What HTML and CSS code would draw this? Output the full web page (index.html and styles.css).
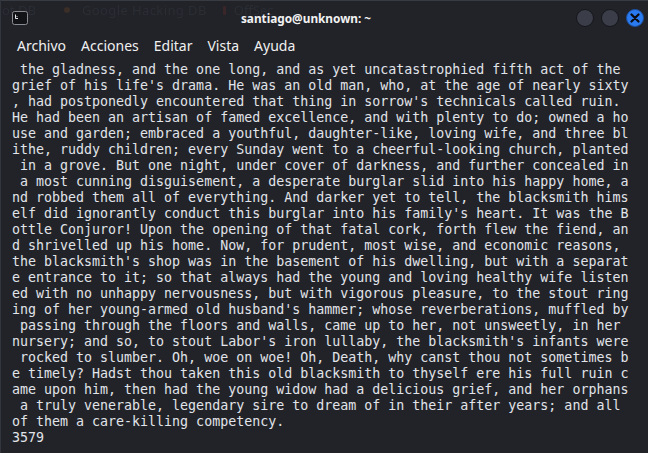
FILE: index.html
```html
<!DOCTYPE html>
<html lang="es">
<head>
<meta charset="utf-8">
<title>santiago@unknown: ~</title>
<link rel="stylesheet" href="styles.css">
</head>
<body>
<div class="window">
  <div class="ghost" aria-hidden="true"><span class="g1">ot DB</span><i class="dot orange"></i><span class="g2">Google Hacking DB</span><i class="dot red"></i><span class="g3">OffSec</span></div>
  <header class="titlebar">
    <div class="app-icon">
      <svg width="16" height="14" viewBox="0 0 16 14">
        <rect x="0.5" y="0.5" width="15" height="13" rx="2" fill="#121317" stroke="#8a8c93"/>
        <path d="M3.5 3.5 L3.5 7.5 M3.5 7.5 L6 7.5" stroke="#e6e6e6" stroke-width="1" fill="none"/>
        <path d="M4.5 5 L5.5 6" stroke="#bdbdbd" stroke-width="1"/>
      </svg>
    </div>
    <div class="title">santiago@unknown: ~</div>
    <div class="controls">
      <span class="btn"></span>
      <span class="btn"></span>
      <span class="btn close">
        <svg width="10" height="10" viewBox="0 0 10 10"><path d="M1.5 1.5 L8.5 8.5 M8.5 1.5 L1.5 8.5" stroke="#0b0c10" stroke-width="2.2" stroke-linecap="round"/></svg>
      </span>
    </div>
  </header>
  <nav class="menubar">
    <span>Archivo</span>
    <span>Acciones</span>
    <span>Editar</span>
    <span>Vista</span>
    <span>Ayuda</span>
  </nav>
  <pre class="term"> the gladness, and the one long, and as yet uncatastrophied fifth act of the
grief of his life's drama. He was an old man, who, at the age of nearly sixty
, had postponedly encountered that thing in sorrow's technicals called ruin.
He had been an artisan of famed excellence, and with plenty to do; owned a ho
use and garden; embraced a youthful, daughter-like, loving wife, and three bl
ithe, ruddy children; every Sunday went to a cheerful-looking church, planted
 in a grove. But one night, under cover of darkness, and further concealed in
 a most cunning disguisement, a desperate burglar slid into his happy home, a
nd robbed them all of everything. And darker yet to tell, the blacksmith hims
elf did ignorantly conduct this burglar into his family's heart. It was the B
ottle Conjuror! Upon the opening of that fatal cork, forth flew the fiend, an
d shrivelled up his home. Now, for prudent, most wise, and economic reasons, 
the blacksmith's shop was in the basement of his dwelling, but with a separat
e entrance to it; so that always had the young and loving healthy wife listen
ed with no unhappy nervousness, but with vigorous pleasure, to the stout ring
ing of her young-armed old husband's hammer; whose reverberations, muffled by
 passing through the floors and walls, came up to her, not unsweetly, in her
nursery; and so, to stout Labor's iron lullaby, the blacksmith's infants were
 rocked to slumber. Oh, woe on woe! Oh, Death, why canst thou not sometimes b
e timely? Hadst thou taken this old blacksmith to thyself ere his full ruin c
ame upon him, then had the young widow had a delicious grief, and her orphans
 a truly venerable, legendary sire to dream of in their after years; and all
of them a care-killing competency.
3579</pre>
</div>
</body>
</html>
```
FILE: styles.css
```css
html, body {
  margin: 0;
  padding: 0;
  background: #212329;
}
.window {
  position: relative;
  width: 648px;
  height: 453px;
  overflow: hidden;
  background: #212329;
  border-left: 1px solid #33353d;
  box-sizing: border-box;
}
.ghost {
  position: absolute;
  left: 0;
  top: 1px;
  display: flex;
  align-items: center;
  font-family: "Noto Sans", sans-serif;
  font-size: 13px;
  line-height: 18px;
  color: #2b2d34;
  filter: blur(0.7px);
  pointer-events: none;
}
.ghost .g1 { margin-left: 1px; }
.ghost .orange { margin-left: 28px; }
.ghost .g2 { margin-left: 12px; letter-spacing: 0.4px; }
.ghost .red { margin-left: 16px; }
.ghost .g3 { margin-left: 8px; }
.ghost .dot {
  display: inline-block;
  width: 6px;
  height: 6px;
  border-radius: 3px;
}
.ghost .orange { background: #3a2e26; }
.ghost .red { background: #3a2628; width: 3px; height: 9px; border-radius: 1px; }
.titlebar {
  position: relative;
  height: 30px;
  display: flex;
  align-items: center;
  padding: 4px 4px 0 11px;
  border-top: 1px solid #393b43;
  box-sizing: border-box;
}
.app-icon {
  width: 16px;
  height: 14px;
  display: flex;
}
.title {
  flex: 1;
  text-align: center;
  font-family: "Noto Sans", sans-serif;
  font-weight: bold;
  font-size: 11.8px;
  line-height: 12px;
  color: #f2f2f2;
  padding-left: 8px;
}
.controls {
  display: flex;
  gap: 7px;
  align-items: center;
}
.btn {
  width: 18px;
  height: 18px;
  border-radius: 50%;
  background: #3b3e49;
  border: 1px solid #15161b;
  box-sizing: border-box;
  display: flex;
  align-items: center;
  justify-content: center;
}
.btn.close {
  background: #2b7bf0;
  border-color: #1d4fa0;
}
.menubar {
  height: 30px;
  display: flex;
  align-items: center;
  gap: 15px;
  padding: 0 0 0 16px;
  font-family: "Noto Sans", sans-serif;
  font-size: 14px;
  color: #f0f0f0;
}
.term {
  margin: 0;
  padding: 2px 0 0 11px;
  font-family: "DejaVu Sans Mono", monospace;
  font-size: 13.3px;
  line-height: 16px;
  color: #e1e4ea;
  white-space: pre;
}
```
